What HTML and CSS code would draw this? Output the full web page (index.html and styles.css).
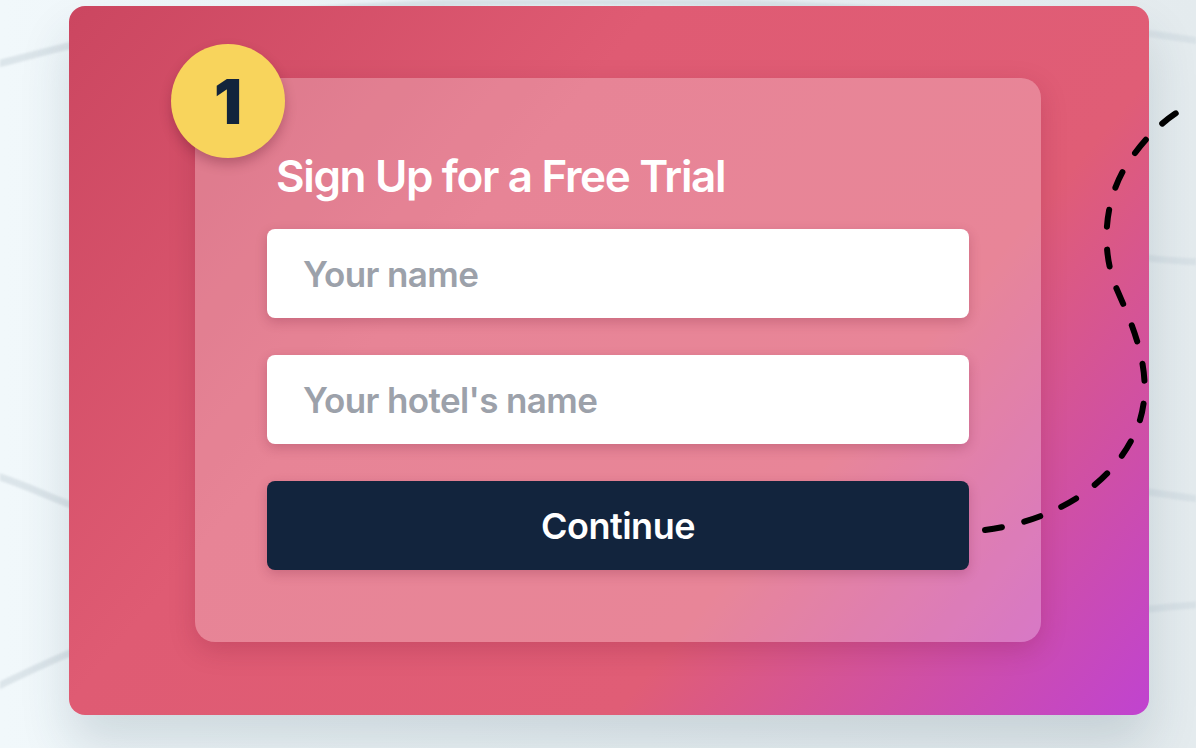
FILE: index.html
```html
<!DOCTYPE html>
<html lang="en">
<head>
    <meta charset="UTF-8">
    <meta name="viewport" content="width=device-width, initial-scale=1.0">
    <title>Free Trial Sign Up</title>
    <link rel="stylesheet" href="styles.css">
</head>
<body>
    <svg class="scribbles" width="1196" height="748" viewBox="0 0 1196 748">
        <path d="M-10 66 C 30 56, 70 44, 140 30 C 300 2, 520 -2, 760 4 C 950 10, 1100 25, 1206 42" />
        <path d="M-10 474 C 20 482, 50 498, 90 512" />
        <path d="M-10 690 C 20 676, 50 660, 90 645" />
        <path d="M1120 255 C 1150 258, 1175 262, 1206 262" />
        <path d="M1120 488 C 1150 492, 1175 496, 1206 500" />
        <path d="M1120 612 C 1150 609, 1175 606, 1206 604" />
    </svg>

    <main class="stage">
        <section class="promo-card">
            <div class="form-card">
                <span class="step-badge">1</span>
                <h2 class="form-title">Sign Up for a Free Trial</h2>
                <form class="trial-form" onsubmit="return false;">
                    <input type="text" placeholder="Your name">
                    <input type="text" placeholder="Your hotel's name">
                    <button type="submit">Continue</button>
                </form>
            </div>
        </section>
    </main>

    <svg class="dash-trail" width="1196" height="748" viewBox="0 0 1196 748">
        <path d="M985 530 C 1060 520, 1120 480, 1140 420 C 1155 370, 1130 320, 1115 285 C 1100 245, 1105 195, 1130 160 C 1145 138, 1165 118, 1188 106" />
    </svg>
</body>
</html>
```

FILE: styles.css
```css
body {
    margin: 0;
    height: 748px;
    overflow: hidden;
    position: relative;
    font-family: 'Inter', 'Noto Sans', sans-serif;
    background: linear-gradient(90deg, #f1f8fb, #e4ebee);
}
.scribbles {
    position: absolute;
    left: 0;
    top: 0;
    fill: none;
    stroke: #d3dde3;
    stroke-width: 7;
    stroke-linecap: round;
    opacity: 0.7;
    filter: blur(1.2px);
}
.stage {
    position: relative;
    padding: 6px 0 0 69px;
}
.promo-card {
    width: 1080px;
    height: 709px;
    box-sizing: border-box;
    padding: 72px 0 0 126px;
    border-radius: 16px;
    background: linear-gradient(130deg, #cb4660 0%, #df5b73 35%, #e05d76 68%, #c043d0 100%);
    box-shadow: 0 30px 50px rgba(40, 70, 90, 0.16);
}
.form-card {
    position: relative;
    width: 846px;
    height: 564px;
    box-sizing: border-box;
    padding: 72px;
    border-radius: 20px;
    background: rgba(255, 255, 255, 0.25);
    box-shadow: 0 8px 26px rgba(120, 20, 50, 0.22);
}
.step-badge {
    position: absolute;
    left: -24px;
    top: -34px;
    width: 114px;
    height: 114px;
    border-radius: 50%;
    background: #f8d45c;
    color: #12243c;
    font-size: 62px;
    font-weight: 900;
    display: flex;
    align-items: center;
    justify-content: center;
    box-shadow: 0 6px 12px rgba(90, 20, 40, 0.3);
}
.form-title {
    margin: 0 0 27px 9px;
    font-size: 44px;
    line-height: 52px;
    font-weight: 600;
    color: #fff;
    letter-spacing: -1.35px;
}
.trial-form {
    display: flex;
    flex-direction: column;
    gap: 37px;
}
.trial-form input,
.trial-form button {
    height: 89px;
    border: none;
    border-radius: 8px;
    font-family: inherit;
    box-shadow: 0 4px 12px rgba(110, 20, 50, 0.24);
}
.trial-form input {
    padding: 0 36px;
    background: #fff;
    color: #333;
    font-size: 35px;
    font-weight: 600;
    letter-spacing: -0.6px;
}
.trial-form input::placeholder {
    color: #9ca1aa;
}
.trial-form button {
    background: #12243d;
    color: #fff;
    font-size: 36px;
    font-weight: 600;
    letter-spacing: -0.5px;
    cursor: pointer;
}
.dash-trail {
    position: absolute;
    left: 0;
    top: 0;
    fill: none;
    stroke: #000;
    stroke-width: 6;
    stroke-linecap: round;
    stroke-dasharray: 17 23;
    pointer-events: none;
}
```
